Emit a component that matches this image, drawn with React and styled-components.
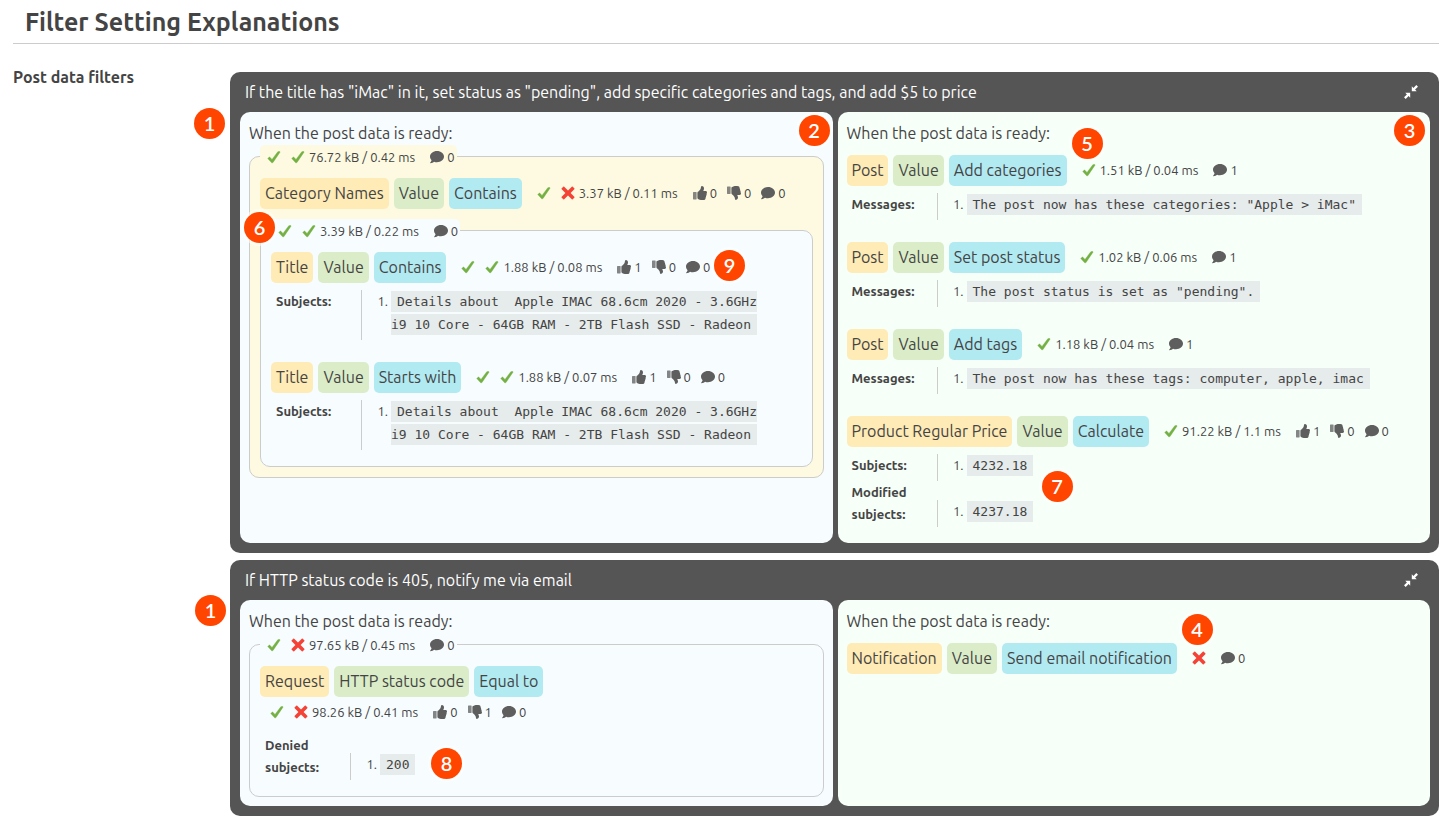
import React from "react";
import styled, { createGlobalStyle } from "styled-components";
import { FaComment } from "react-icons/fa";

const GlobalStyle = createGlobalStyle`
  * { box-sizing: border-box; }
  body {
    margin: 0;
    background: #fff;
    color: #444;
    font-family: Ubuntu, "Noto Sans", sans-serif;
    font-size: 16px;
    line-height: 24px;
  }
`;

const Page = styled.main`
  padding: 0 15px 13px 13px;
`;

const PageTitle = styled.h1`
  margin: 0;
  padding: 4px 12px 3px;
  border-bottom: 1px solid #ccc;
  font-size: 25px;
  line-height: 36px;
  font-weight: 700;
`;

const SettingRow = styled.section`
  display: grid;
  grid-template-columns: 217px minmax(0, 1fr);
  padding-top: 28px;
`;

const SettingName = styled.h2`
  margin: 0;
  font-size: 16px;
  line-height: 10px;
  font-weight: 700;
`;

const CardList = styled.div`
  display: flex;
  flex-direction: column;
  gap: 7px;
`;

const Card = styled.article`
  position: relative;
  padding: 0 9px 10px 10px;
  border-radius: 10px;
  background: #555;
`;

const CardHeader = styled.header`
  display: flex;
  align-items: center;
  justify-content: space-between;
  height: 40px;
  padding: 0 12px 0 5px;
  color: #fff;
`;

const CardTitle = styled.h3`
  margin: 0;
  font-size: 16px;
  font-weight: 400;
`;

const IconButton = styled.button`
  display: flex;
  padding: 0;
  border: 0;
  background: none;
  color: inherit;
  cursor: pointer;
`;

const Panels = styled.div`
  display: grid;
  grid-template-columns: repeat(2, minmax(0, 1fr));
  gap: 5px;
`;

const Panel = styled.section`
  position: relative;
  padding: 9px;
  border-radius: 10px;
  background: ${(p) => (p.$kind === "action" ? "#f7fff9" : "#f7fcff")};
`;

const PanelTitle = styled.h4`
  margin: 0;
  font-size: 16px;
  font-weight: 400;
`;

const PanelRows = styled.div`
  padding: 10px 0 1px;
`;

const GroupBox = styled.fieldset`
  min-width: 0;
  margin: 0;
  padding: 10px;
  border: 1px solid #ccc;
  border-radius: 10px;
  background: ${(p) => (p.$tone === "yellow" ? "#fdfae1" : "#f7fcff")};
`;

const GroupLegend = styled.legend`
  padding: 0 2px 0 7px;
  border-radius: 5px;
  background: ${(p) => (p.$tone === "yellow" ? "#fdfae1" : "#f7fcff")};
`;

const FilterBox = styled.div`
  & + & { margin-top: 16px; }
  & + ${GroupBox} { margin-top: 10px; }
`;

const FilterHead = styled.div`
  display: flex;
  flex-wrap: wrap;
  column-gap: 5px;
`;

const chipColors = { subject: "#ffebb5", property: "#dbedc8", command: "#b2eaf2" };

const Chip = styled.span`
  padding: 0 5px;
  border-radius: 5px;
  background: ${(p) => chipColors[p.$kind]};
  line-height: 31px;
  white-space: nowrap;
`;

const HeadStatus = styled.div`
  padding-left: 10px;
  flex-basis: ${(p) => (p.$stacked ? "100%" : "auto")};
`;

const StatusLine = styled.div`
  display: flex;
  align-items: center;
  height: ${(p) => (p.$compact ? 23 : 30)}px;
  gap: 15px;
  font-size: 13px;
  white-space: nowrap;
`;

const Results = styled.span`
  display: flex;
  align-items: center;
  gap: 10px;
`;

const Cost = styled.span`
  margin-left: -6px;
`;

const Slash = styled.span`
  margin: 0 3px;
`;

const Counts = styled.span`
  display: flex;
  gap: 10px;
`;

const Count = styled.span`
  display: flex;
  align-items: center;
  gap: 3px;

  svg { color: #5e5e5e; }
`;

const Details = styled.dl`
  margin: 0;
  padding: 7px 0 6px;
`;

const Detail = styled.div`
  display: grid;
  grid-template-columns: 90px minmax(0, 1fr);
  font-size: 13px;
`;

const DetailLabel = styled.dt`
  max-width: 75px;
  padding: 0 0 2px 5px;
  font-weight: 700;
  line-height: 22px;
`;

const DetailValue = styled.dd`
  align-self: end;
  margin: 0;
  padding-bottom: 4px;
  border-left: 1px solid #ccc;
`;

const ValueList = styled.ol`
  margin: 0;
  padding-left: 29px;
  line-height: 23px;
`;

const Code = styled.code`
  padding: 3px 6px;
  background: #e6ebeb;
  font-family: "DejaVu Sans Mono", monospace;
  font-size: 13px;
  white-space: pre-wrap;
`;

const Badge = styled.span`
  position: absolute;
  left: ${(p) => p.$x}px;
  right: ${(p) => p.$right}px;
  top: ${(p) => p.$y}px;
  width: 31px;
  height: 31px;
  border-radius: 50%;
  background: #ff4500;
  box-shadow: 0 0 0 3px rgba(255, 255, 255, 0.5);
  color: #fff;
  font-family: Lato, sans-serif;
  font-size: 20px;
  font-weight: 600;
  line-height: 30px;
  text-align: center;
`;

const CheckIcon = () => (
  <svg width="14" height="14" viewBox="0 0 14 14" role="img" aria-label="Passed">
    <path d="M1 8.2 2 7.2c.3-.3.7-.2 1 .1l2 2.1L10.6 2c.2-.3.4-.4.8-.4h1.3c.4 0 .5.3.3.6L6.2 12.2c-.5.8-1.4.9-2 .1L1 8.8c-.2-.2-.2-.4 0-.6z" fill="#74b043" stroke="#74b043" strokeWidth=".4" />
  </svg>
);

const CrossIcon = () => (
  <svg width="14" height="14" viewBox="0 0 14 14" role="img" aria-label="Failed">
    <path d="M3.2.7 7 4.4 10.8.7c.3-.3.6-.3.9 0l1.6 1.6c.3.3.3.6 0 .9L9.6 7l3.7 3.8c.3.3.3.6 0 .9l-1.6 1.6c-.3.3-.6.3-.9 0L7 9.6l-3.8 3.7c-.3.3-.6.3-.9 0L.7 11.7c-.3-.3-.3-.6 0-.9L4.4 7 .7 3.2c-.3-.3-.3-.6 0-.9L2.3.7c.3-.3.6-.3.9 0z" fill="#f44336" />
  </svg>
);

const ThumbIcon = ({ down }) => (
  <svg width="14" height="14" viewBox="0 0 14 14" fill="currentColor" aria-hidden="true">
    <g transform={down ? "matrix(1 0 0 -1 0 14)" : undefined}>
      <path opacity=".75" d="M.5 6h2.6c.3 0 .5.2.5.5v6.6c0 .3-.2.5-.5.5H.5c-.3 0-.5-.2-.5-.5V6.500c0-.3.2-.5.5-.5z" />
      <path d="M4.400 6.700c0-.4.2-.7.5-.9 1.200-1 2.400-2 2.800-3.400L8 1c.1-.6.4-.9.9-.9C10.300.1 11 1.200 11 2.400c0 1-.4 1.800-.8 2.700h2.300c1 0 1.500.7 1.500 1.400 0 .5-.2.9-.5 1.200.3.800.1 1.600-.4 2.100.1.800-.1 1.400-.5 1.900.100 1.400-.8 2.300-2.300 2.300H9c-1.600 0-2.900-.6-3.900-1.100-.4-.2-.7-.4-.7-.8z" />
    </g>
  </svg>
);

const CollapseIcon = () => (
  <svg width="14" height="14" viewBox="0 0 14 14" fill="currentColor" aria-hidden="true">
    <path d="M12.3 0 14 1.7l-2.9 2.9 1.6 1.6H7.8V1.3l1.6 1.6zM1.7 14 0 12.3l2.9-2.9-1.6-1.6h4.9v4.9l-1.6-1.6z" />
  </svg>
);

function Status({ marks, cost, votes, messages, compact }) {
  return (
    <StatusLine $compact={compact}>
      <Results>
        {marks.split("").map((m, i) => (m === "y" ? <CheckIcon key={i} /> : <CrossIcon key={i} />))}
        {cost && (
          <Cost>
            {cost[0]} kB<Slash>/</Slash>{cost[1]} ms
          </Cost>
        )}
      </Results>
      <Counts>
        {votes && <Count><ThumbIcon />{votes[0]}</Count>}
        {votes && <Count><ThumbIcon down />{votes[1]}</Count>}
        <Count><FaComment size={14} />{messages}</Count>
      </Counts>
    </StatusLine>
  );
}

function Filter({ chips, status, stacked, details }) {
  return (
    <FilterBox>
      <FilterHead>
        <Chip $kind="subject">{chips[0]}</Chip>
        <Chip $kind="property">{chips[1]}</Chip>
        <Chip $kind="command">{chips[2]}</Chip>
        <HeadStatus $stacked={stacked}><Status {...status} /></HeadStatus>
      </FilterHead>
      {details && (
        <Details>
          {details.map(([label, value]) => (
            <Detail key={label}>
              <DetailLabel>{label}</DetailLabel>
              <DetailValue>
                <ValueList><li><Code>{value}</Code></li></ValueList>
              </DetailValue>
            </Detail>
          ))}
        </Details>
      )}
    </FilterBox>
  );
}

function Group({ tone, status, children }) {
  return (
    <GroupBox $tone={tone}>
      <GroupLegend $tone={tone}><Status {...status} compact /></GroupLegend>
      {children}
    </GroupBox>
  );
}

function FilterCard({ title, children }) {
  return (
    <Card>
      <CardHeader>
        <CardTitle>{title}</CardTitle>
        <IconButton type="button" aria-label="Collapse"><CollapseIcon /></IconButton>
      </CardHeader>
      <Panels>{children}</Panels>
    </Card>
  );
}

const READY = "When the post data is ready:";
const PRODUCT =
  "Details about  Apple IMAC 68.6cm 2020 - 3.6GHz\ni9 10 Core - 64GB RAM - 2TB Flash SSD - Radeon";

export default function App() {
  return (
    <>
      <GlobalStyle />
      <Page>
        <PageTitle>Filter Setting Explanations</PageTitle>
        <SettingRow>
          <SettingName>Post data filters</SettingName>
          <CardList>
            <FilterCard title={'If the title has "iMac" in it, set status as "pending", add specific categories and tags, and add $5 to price'}>
              <Panel>
                <PanelTitle>{READY}</PanelTitle>
                <Group tone="yellow" status={{ marks: "yy", cost: ["76.72", "0.42"], messages: 0 }}>
                  <Filter
                    chips={["Category Names", "Value", "Contains"]}
                    status={{ marks: "yn", cost: ["3.37", "0.11"], votes: [0, 0], messages: 0 }}
                  />
                  <Group status={{ marks: "yy", cost: ["3.39", "0.22"], messages: 0 }}>
                    <Filter
                      chips={["Title", "Value", "Contains"]}
                      status={{ marks: "yy", cost: ["1.88", "0.08"], votes: [1, 0], messages: 0 }}
                      details={[["Subjects:", PRODUCT]]}
                    />
                    <Filter
                      chips={["Title", "Value", "Starts with"]}
                      status={{ marks: "yy", cost: ["1.88", "0.07"], votes: [1, 0], messages: 0 }}
                      details={[["Subjects:", PRODUCT]]}
                    />
                  </Group>
                </Group>
                <Badge $x={-46} $y={-4}>1</Badge>
                <Badge $right={3} $y={3}>2</Badge>
                <Badge $x={4} $y={100}>6</Badge>
                <Badge $x={474} $y={138}>9</Badge>
              </Panel>
              <Panel $kind="action">
                <PanelTitle>{READY}</PanelTitle>
                <PanelRows>
                  <Filter
                    chips={["Post", "Value", "Add categories"]}
                    status={{ marks: "y", cost: ["1.51", "0.04"], messages: 1 }}
                    details={[["Messages:", 'The post now has these categories: "Apple > iMac"']]}
                  />
                  <Filter
                    chips={["Post", "Value", "Set post status"]}
                    status={{ marks: "y", cost: ["1.02", "0.06"], messages: 1 }}
                    details={[["Messages:", 'The post status is set as "pending".']]}
                  />
                  <Filter
                    chips={["Post", "Value", "Add tags"]}
                    status={{ marks: "y", cost: ["1.18", "0.04"], messages: 1 }}
                    details={[["Messages:", "The post now has these tags: computer, apple, imac"]]}
                  />
                  <Filter
                    chips={["Product Regular Price", "Value", "Calculate"]}
                    status={{ marks: "y", cost: ["91.22", "1.1"], votes: [1, 0], messages: 0 }}
                    details={[["Subjects:", "4232.18"], ["Modified subjects:", "4237.18"]]}
                  />
                </PanelRows>
                <Badge $right={5} $y={3}>3</Badge>
                <Badge $x={234} $y={16}>5</Badge>
                <Badge $x={204} $y={359}>7</Badge>
              </Panel>
            </FilterCard>
            <FilterCard title="If HTTP status code is 405, notify me via email">
              <Panel>
                <PanelTitle>{READY}</PanelTitle>
                <Group status={{ marks: "yn", cost: ["97.65", "0.45"], messages: 0 }}>
                  <Filter
                    stacked
                    chips={["Request", "HTTP status code", "Equal to"]}
                    status={{ marks: "yn", cost: ["98.26", "0.41"], votes: [0, 1], messages: 0 }}
                    details={[["Denied subjects:", "200"]]}
                  />
                </Group>
                <Badge $x={-45} $y={-5}>1</Badge>
                <Badge $x={191} $y={148}>8</Badge>
              </Panel>
              <Panel $kind="action">
                <PanelTitle>{READY}</PanelTitle>
                <PanelRows>
                  <Filter
                    chips={["Notification", "Value", "Send email notification"]}
                    status={{ marks: "n", messages: 0 }}
                  />
                </PanelRows>
                <Badge $x={344} $y={14}>4</Badge>
              </Panel>
            </FilterCard>
          </CardList>
        </SettingRow>
      </Page>
    </>
  );
}
